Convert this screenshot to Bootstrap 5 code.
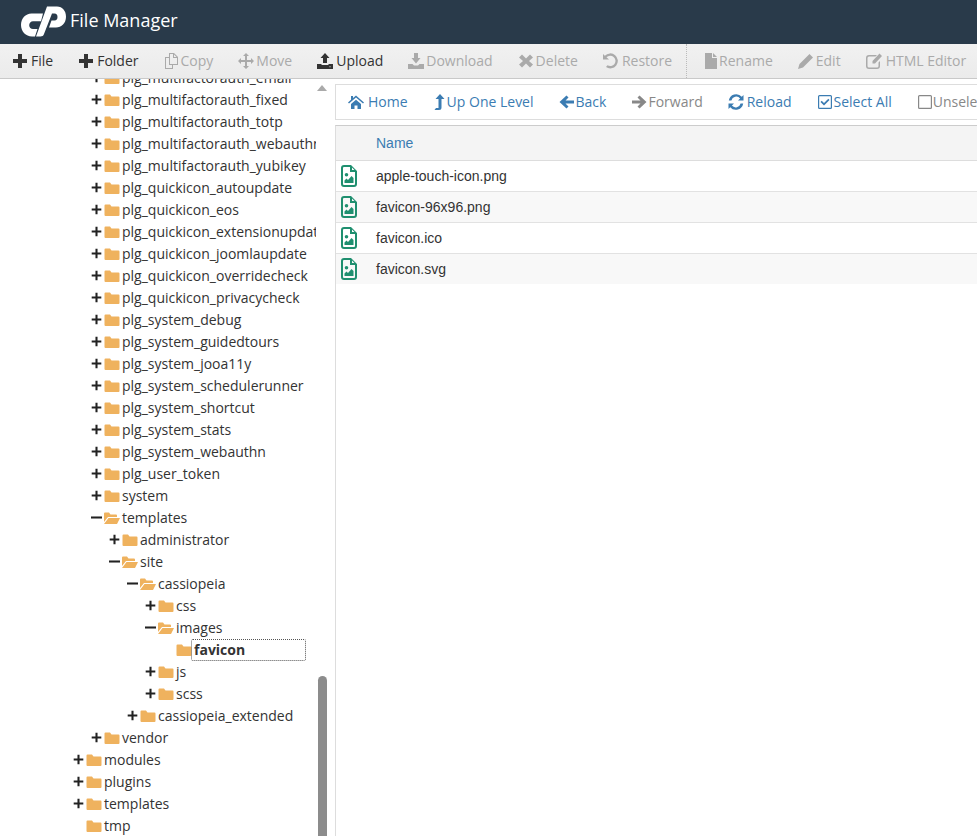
<!DOCTYPE html>
<html lang="en">
<head>
    <meta charset="UTF-8">
    <meta name="viewport" content="width=device-width, initial-scale=1">
    <title>File Manager</title>
    <link href="https://cdn.jsdelivr.net/npm/bootstrap@5.3.0/dist/css/bootstrap.min.css" rel="stylesheet">
    <script src="https://cdn.jsdelivr.net/npm/bootstrap@5.3.0/dist/js/bootstrap.bundle.min.js"></script>
    <style>
        body { font-family: "Open Sans", sans-serif; font-size: 14px; color: #333; }
        .fm-head { height: 44px; background: #293a4a; padding: 0 0 0 20px; flex-wrap: nowrap; justify-content: flex-start; }
        .fm-title { font-size: 18px; color: #fff; margin-left: 2px; margin-top: -2px; }
        .fm-tools { height: 35px; flex: none; padding-left: 13px; gap: 26px; background: linear-gradient(#f1f1f1, #ebebeb); border-bottom: 1px solid #c9c9c9; white-space: nowrap; }
        .fm-tool { color: #333; line-height: 34px; }
        .fm-tool.off { color: #aaa; }
        .fm-slot { flex: none; display: inline-flex; align-items: center; }
        .fm-slot svg { flex: none; width: 16px; height: 16px; margin-left: -1px; fill: currentColor; }
        .s13 { width: 13px; } .s14 { width: 14px; } .s15 { width: 15px; } .s16 { width: 16px; } .s17 { width: 17px; } .s18 { width: 18px; } .s19 { width: 19px; }
        .fm-sep { border-left: 1px dotted #bbb; margin: 0 -8px 0 -12px; }
        .fm-tree { width: 316px; flex: none; overflow: hidden; }
        .fm-tree ul { margin: -12px 0 0 73px; padding: 0; list-style: none; white-space: nowrap; }
        .tree-row { height: 22px; align-items: center; }
        .tree-tog { width: 13px; flex: none; display: inline-flex; justify-content: center; margin-left: -1px; margin-right: 1px; color: #222; }
        .tree-tog svg { width: 11px; height: 11px; fill: currentColor; }
        .tree-dir { width: 18px; flex: none; display: inline-flex; color: #efb25e; }
        .tree-dir svg { width: 16px; height: 14px; fill: currentColor; }
        .tree-cur { font-weight: 700; margin-left: -3px; padding-left: 2px; width: 115px; height: 22px; line-height: 20px; border: 1px dotted #555; border-radius: 2px; }
        .fm-scroll { width: 19px; flex: none; padding-left: 2px; }
        .fm-up { width: 0; height: 0; margin: 6px 0 0 -1px; border: 5px solid transparent; border-top: 0; border-bottom: 6px solid #aaa; }
        .fm-thumb { width: 9px; height: 160px; background: #8c8c8c; border-radius: 5px 5px 0 0; }
        .fm-pane { min-width: 0; padding-top: 5px; }
        .fm-nav { height: 36px; flex: none; gap: 26px; padding-left: 13px; border: 1px solid #ddd; border-right: 0; white-space: nowrap; overflow: hidden; background: #fff; }
        .fm-link { color: #3b7cb2; }
        .fm-link.off { color: #888; }
        .fm-files { margin-top: 5px; border-top: 1px solid #ccc; border-left: 1px solid #ddd; font-family: "Liberation Sans", sans-serif; }
        .fm-files .table { margin: 0; font-size: 14px; --bs-table-color: #333; }
        .fm-files th { height: 35px; padding: 0 0 0 40px; background: #f4f4f4; font-weight: 400; color: #3b7cb2; vertical-align: middle; border-bottom: 1px solid #ddd; }
        .fm-files td { height: 31px; padding: 0; vertical-align: middle; border-bottom: 1px solid #e2e2e2; }
        .fm-files tbody tr:nth-child(even) td { background: #f8f8f8; }
        .fm-files tbody tr:last-child td { height: 30px; border-bottom: 0; }
        .file-ic { width: 40px; padding-left: 5px !important; color: #1f8f6f; }
        .file-ic svg { display: block; width: 16px; height: 22px; }
    </style>
</head>
<body class="vh-100 overflow-hidden d-flex flex-column">

<svg width="0" height="0" class="position-absolute">
    <symbol id="i-plus" viewBox="0 0 16 16"><path d="M6 1h4v5h5v4h-5v5H6v-5H1V6h5z"/></symbol>
    <symbol id="i-tplus" viewBox="0 0 16 16"><path d="M6.500 1h3v5.500H15v3H9.500V15h-3V9.500H1v-3h5.500z"/></symbol>
    <symbol id="i-tminus" viewBox="0 0 16 16"><path d="M0 6.500h16v3H0z"/></symbol>
    <symbol id="i-copy" viewBox="0 0 16 16"><path d="M5 0h5l4 4v8H9v4H1V4h4zm1 1v10h7V5H9V1zm4 .5V4h2.500zM2 5v10h6v-3H5V5z"/></symbol>
    <symbol id="i-move" viewBox="0 0 16 16"><path d="M8 0l3 3H9v4h4V5l3 3-3 3V9H9v4h2l-3 3-3-3h2V9H3v2L0 8l3-3v2h4V3H5z"/></symbol>
    <symbol id="i-upload" viewBox="0 0 16 16"><path d="M8 0l4.500 5H10v5H6V5H3.500zM0 11h4.500v1h7v-1H16v5H0zm12.500 2.200v1h1v-1z"/></symbol>
    <symbol id="i-download" viewBox="0 0 16 16"><path d="M6 0h4v5h2.500L8 10.500 3.500 5H6zM0 11h4.500l1.500 1.500h4l1.500-1.500H16v5H0z"/></symbol>
    <symbol id="i-x" viewBox="0 0 16 16"><path d="M4 1.500l4 4 4-4L15 4.500l-4 3.500 4 3.500-3 3-4-4-4 4-3-3 4-3.500-4-3.500z"/></symbol>
    <symbol id="i-restore" viewBox="0 0 16 16"><path d="M0 1l1.800 1.800A7.500 7.500 0 1 1 3 14l1.500-1.700a5.200 5.200 0 1 0-1-8L6 6.500H0z"/></symbol>
    <symbol id="i-file" viewBox="0 0 16 16"><path d="M1 0h7v5h5v11H1zm8 0l4 4H9z"/></symbol>
    <symbol id="i-pencil" viewBox="0 0 16 16"><path d="M11.500 1l3.500 3.500L5 14.500 0 16l1.500-5z"/></symbol>
    <symbol id="i-editor" viewBox="0 0 16 16"><path d="M3 2h8l-1.500 1.500H3A1.500 1.500 0 0 0 1.500 5v8A1.500 1.500 0 0 0 3 14.500h8a1.500 1.500 0 0 0 1.500-1.500V9.500L14 8v5a3 3 0 0 1-3 3H3a3 3 0 0 1-3-3V5a3 3 0 0 1 3-3zm10.500-1.500L16 3 9 10.500H6.500V8z"/></symbol>
    <symbol id="i-home" viewBox="0 0 16 16"><path d="M8 1.500L16 8.500l-1 1-7-6-7 6-1-1 3-2.700V2h2v2zM3 10l5-4.300 5 4.300v5H9.500v-3.500h-3V15H3z"/></symbol>
    <symbol id="i-up" viewBox="0 0 16 16"><path d="M7 0l4.500 5h-3v8.500A2.500 2.500 0 0 1 6 16H1.500l1.500-2h2.500V5h-3z"/></symbol>
    <symbol id="i-back" viewBox="0 0 16 16"><path d="M7.500 1.500L9.500 3.500 6.500 6.500H15v3H6.500l3 3-2 2L.5 8z"/></symbol>
    <symbol id="i-forward" viewBox="0 0 16 16"><path d="M8.500 1.500L6.500 3.500l3 3H1v3h8.500l-3 3 2 2L15.500 8z"/></symbol>
    <symbol id="i-reload" viewBox="0 0 16 16"><path d="M15.500 1v5.500H10l2.100-2.100A5 5 0 0 0 3.400 6.500H.8A7.500 7.500 0 0 1 13.800 2.700zM.5 15V9.500H6l-2.100 2.100a5 5 0 0 0 8.700-2.100h2.600a7.500 7.500 0 0 1-13 3.800z"/></symbol>
    <symbol id="i-check" viewBox="0 0 16 16"><path d="M2.500 1h11A1.500 1.500 0 0 1 15 2.500v11a1.500 1.500 0 0 1-1.500 1.500h-11A1.500 1.500 0 0 1 1 13.500v-11A1.500 1.500 0 0 1 2.500 1zm0 1.200a.4.4 0 0 0-.3.3v11a.4.4 0 0 0 .3.3h11a.4.4 0 0 0 .3-.3v-11a.4.4 0 0 0-.3-.3zM7 11.500L3.500 8l1.200-1.200L7 9l4.300-4.300L12.500 6z"/></symbol>
    <symbol id="i-box" viewBox="0 0 16 16"><path d="M2.500 1h11A1.500 1.500 0 0 1 15 2.500v11a1.500 1.500 0 0 1-1.500 1.500h-11A1.500 1.500 0 0 1 1 13.500v-11A1.500 1.500 0 0 1 2.500 1zm0 1.200a.4.4 0 0 0-.3.3v11a.4.4 0 0 0 .3.3h11a.4.4 0 0 0 .3-.3v-11a.4.4 0 0 0-.3-.3z"/></symbol>
    <symbol id="i-dir" viewBox="0 0 16 14"><path d="M1.500 1.500h4.500l1.500 2h7A1 1 0 0 1 15.500 4.500v7.500a1 1 0 0 1-1 1h-13a1 1 0 0 1-1-1v-9.500a1 1 0 0 1 1-1z"/></symbol>
    <symbol id="i-dir-open" viewBox="0 0 16 14"><path d="M1 1.500h4l1.500 2H12a1 1 0 0 1 1 1V6H4L0 11V2.500a1 1 0 0 1 1-1zM4.500 7H16l-3 6H0z"/></symbol>
    <symbol id="i-img" viewBox="0 0 16 22"><path fill="currentColor" fill-rule="evenodd" d="M3 0h7l6 6v13a3 3 0 0 1-3 3H3a3 3 0 0 1-3-3V3a3 3 0 0 1 3-3zm0 2a1 1 0 0 0-1 1v16a1 1 0 0 0 1 1h10a1 1 0 0 0 1-1V7h-5V2zm8 .5V5h2.500zM5.500 8a1.800 1.800 0 1 1 0 3.600 1.800 1.800 0 0 1 0-3.600zM3.500 18v-2.500l2-2 1.500 1.500 3.500-4 2 2V18z"/></symbol>
</svg>

<nav class="navbar fm-head">
    <svg width="48" height="33" viewBox="20 4 48 33" fill="#fff" aria-label="cPanel">
        <path d="M43 12.500H31.500C25.500 12.500 21 17.500 21 24c0 6.500 4.800 11.500 11 11.500h3l2.500-7.500h-4.500c-2.200 0-3.800-1.700-3.800-3.800s1.600-3.900 3.800-3.900h8z"/>
        <path d="M36 35.500L47 5.500h10c5.500 0 9 4.300 9 10.200 0 6.400-4.500 10.800-10 10.800h-7l2.500-7h3c2 0 3-1.500 3-3.500s-1-3.500-3-3.500H52l-8 20.500c-.6 1.800-2 2.500-3.500 2.500z"/>
    </svg>
    <span class="fm-title">File Manager</span>
</nav>

<div class="fm-tools d-flex align-items-center" id="toolbar"></div>

<div class="d-flex flex-grow-1 overflow-hidden">
    <div class="fm-tree"><ul id="tree"></ul></div>
    <div class="fm-scroll d-flex flex-column justify-content-between">
        <div class="fm-up"></div>
        <div class="fm-thumb"></div>
    </div>
    <div class="fm-pane flex-grow-1 d-flex flex-column">
        <div class="fm-nav d-flex align-items-center" id="actions"></div>
        <div class="fm-files flex-grow-1">
            <table class="table">
                <thead><tr><th colspan="2">Name</th></tr></thead>
                <tbody id="files"></tbody>
            </table>
        </div>
    </div>
</div>

<script>
const icon = (id, slot) => `<span class="fm-slot s${slot}"><svg><use href="#i-${id}"/></svg></span>`;

// Top toolbar
const tools = [
    ["plus", 18, "File", 1], ["plus", 18, "Folder", 1], ["copy", 16, "Copy", 0], ["move", 17, "Move", 0],
    ["upload", 18, "Upload", 1], ["download", 17, "Download", 0], ["x", 17, "Delete", 0], ["restore", 18, "Restore", 0],
    null,
    ["file", 14, "Rename", 0], ["pencil", 17, "Edit", 0], ["editor", 19, "HTML Editor", 0]
];
document.getElementById("toolbar").innerHTML = tools.map(t => t === null
    ? '<div class="fm-sep align-self-stretch"></div>'
    : `<span class="fm-tool d-inline-flex align-items-center ${t[3] ? "" : "off"}">${icon(t[0], t[1])}${t[2]}</span>`).join("");

// Second bar above the list
const actions = [
    ["home", 19, "Home", 1], ["up", 13, "Up One Level", 1], ["back", 16, "Back", 1], ["forward", 16, "Forward", 0],
    ["reload", 18, "Reload", 1], ["check", 16, "Select All", 1], ["box", 15, "Unselect All", 0]
];
document.getElementById("actions").innerHTML = actions.map(a =>
    `<span class="fm-link d-inline-flex align-items-center flex-shrink-0 ${a[3] ? "" : "off"}">${icon(a[0], a[1])}${a[2]}</span>`).join("");

// Folder tree: depth, state (+ closed, - open, empty none), name
const rows = [
    ...["multifactorauth_email", "multifactorauth_fixed", "multifactorauth_totp", "multifactorauth_webauthn",
        "multifactorauth_yubikey", "quickicon_autoupdate", "quickicon_eos", "quickicon_extensionupdate",
        "quickicon_joomlaupdate", "quickicon_overridecheck", "quickicon_privacycheck", "system_debug",
        "system_guidedtours", "system_jooa11y", "system_schedulerunner", "system_shortcut", "system_stats",
        "system_webauthn", "user_token"].map(n => [1, "+", "plg_" + n]),
    [1, "+", "system"], [1, "-", "templates"], [2, "+", "administrator"], [2, "-", "site"],
    [3, "-", "cassiopeia"], [4, "+", "css"], [4, "-", "images"], [5, "", "favicon"], [4, "+", "js"], [4, "+", "scss"],
    [3, "+", "cassiopeia_extended"], [1, "+", "vendor"],
    [0, "+", "modules"], [0, "+", "plugins"], [0, "+", "templates"], [0, "", "tmp"]
];
document.getElementById("tree").innerHTML = rows.map(([depth, state, name]) => {
    const tog = state ? `<svg><use href="#i-${state === "+" ? "tplus" : "tminus"}"/></svg>` : "";
    const dir = state === "-" ? "dir-open" : "dir";
    const label = name === "favicon" ? `<span class="tree-cur">${name}</span>` : `<span>${name}</span>`;
    return `<li class="tree-row d-flex" style="padding-left:${depth * 18}px"><span class="tree-tog">${tog}</span><span class="tree-dir"><svg><use href="#i-${dir}"/></svg></span>${label}</li>`;
}).join("");

// File list
document.getElementById("files").innerHTML = ["apple-touch-icon.png", "favicon-96x96.png", "favicon.ico", "favicon.svg"].map(f =>
    `<tr><td class="file-ic"><svg><use href="#i-img"/></svg></td><td>${f}</td></tr>`).join("");
</script>

</body>
</html>
